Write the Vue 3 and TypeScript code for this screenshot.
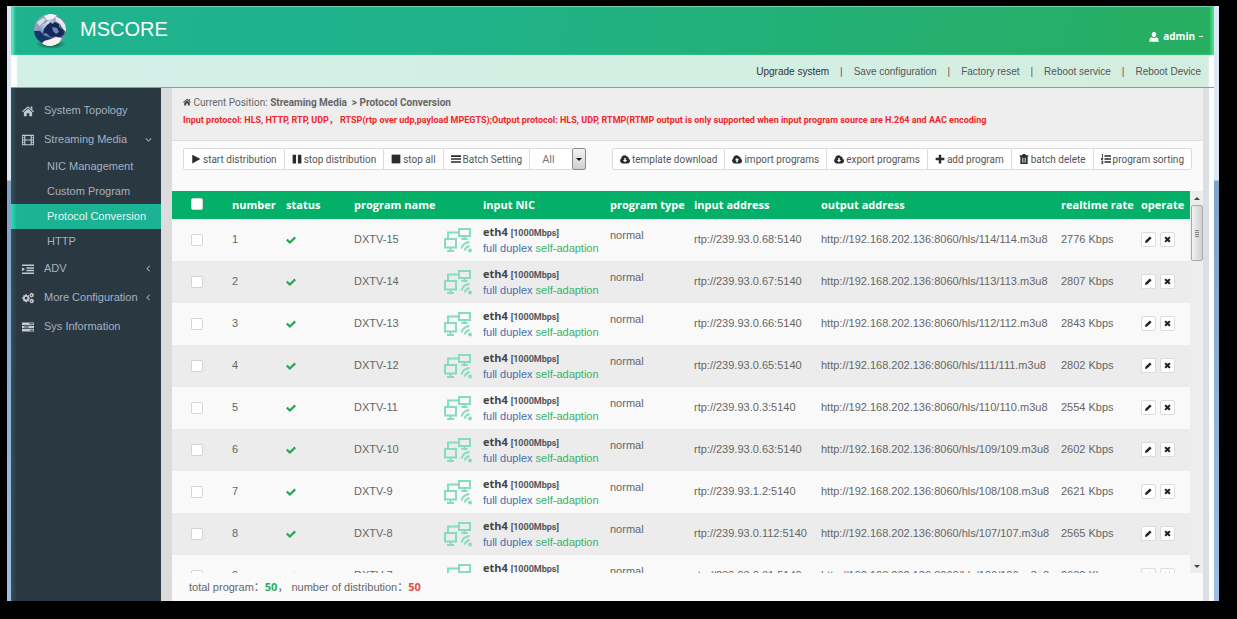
<script setup lang="ts">
import { ref } from 'vue'

interface Program {
  id: number
  name: string
  input: string
  output: string
  rate: number
  selected: boolean
}

const icons: Record<string, string> = {
  home: 'M8 1.500 16 8.300l-1 1.300L8 3.800 1 9.600 0 8.300zM11.600 2h2.200v4l-2.200-1.800zM8 5l5.500 4.500V15H9.700v-4H6.300v4H2.500V9.500z',
  film: 'M0 1h16v14H0zM1.200 2.500v2h1.800v-2zM1.200 5.700v2h1.800v-2zM1.200 8.900v2h1.800v-2zM1.200 12v1.500h1.800V12zM13 2.500v2h1.800v-2zM13 5.700v2h1.800v-2zM13 8.900v2h1.800v-2zM13 12v1.500h1.800V12zM4.500 2.500v4.700h7V2.500zM4.500 8.700v4.800h7V8.700z',
  indent: 'M0 2h16v2H0zM6 5.500h10v2H6zM6 9h10v2H6zM0 12.500h16v2H0zM0 5.500 4 8.300 0 11z',
  server: 'M0 2h16v3.200H0zM0 6.400h16v3.200H0zM0 10.800h16V14H0zM10 3v1.200h5V3zM3 7.400v1.200h6V7.400zM11 11.800V13h4v-1.200z',
  gears: 'M4.500 3h2l.3 1.500 1.500-.6 1.300 1.400-.8 1.400 1.700.5v2l-1.700.5.8 1.400-1.300 1.400-1.500-.6-.3 1.600h-2l-.4-1.600-1.400.6L1.300 11l.8-1.400L.2 9.200v-2l1.900-.5-.8-1.400 1.400-1.400 1.400.6zM5.500 6.400a1.800 1.800 0 1 0 0 3.600 1.800 1.800 0 0 0 0-3.600zM12.500.8l1 1 1.400-.2.3 1.400 1 .7-.8 1.100.2 1.300-1.400.3-.9 1.100-1.100-.9-1.400.2-.2-1.400-1-.9.8-1.100-.1-1.300 1.300-.2zM12.600 3.400a.9.9 0 1 0 0 1.800.9.9 0 0 0 0-1.800zM12.500 8.600l1 1 1.400-.2.3 1.400 1 .7-.8 1.100.2 1.300-1.400.3-.9 1.100-1.100-.9-1.400.2-.2-1.400-1-.9.8-1.100-.1-1.300 1.300-.2zM12.600 11.200a.9.9 0 1 0 0 1.800.9.9 0 0 0 0-1.800z',
  down: 'M2.500 4.500 8 10l5.500-5.500L15 6l-7 7-7-7z',
  left: 'M11.500 2.500 6 8l5.500 5.500L10 15 3 8l7-7z',
  play: 'M2 1v14l13-7z',
  pause: 'M1 1h5.500v14H1zM9.500 1H15v14H9.500z',
  stop: 'M1 1h14v14H1z',
  bars: 'M0 2h16v2.600H0zM0 6.700h16v2.600H0zM0 11.400h16V14H0z',
  cloudDown: 'M4 15a4.300 4.300 0 0 1-2-7.800A5 5 0 0 1 11 4a3 3 0 0 1 2.700 3.700A3.800 3.800 0 0 1 12.800 15zM6.800 6.500v3H4.500L8 13l3.500-3.500H9.200v-3z',
  cloudUp: 'M4 15a4.300 4.300 0 0 1-2-7.800A5 5 0 0 1 11 4a3 3 0 0 1 2.700 3.700A3.800 3.800 0 0 1 12.800 15zM6.800 13v-3H4.500L8 6.500l3.500 3.500H9.200v3z',
  plus: 'M6 1h4v5h5v4h-5v5H6v-5H1V6h5z',
  trash: 'M6 0h4l1 2h4v2h-1.200v12H2.200V4H1V2h4zM5 6v8h1V6zM7.500 6v8h1V6zM10 6v8h1V6z',
  list: 'M5.500 2H16v2.400H5.500zM5.500 6.800H16v2.400H5.500zM5.500 11.600H16V14H5.500zM1.500 0H3v5H1.500zM0 6h3.500v1.500L2 9h1.500v1H0V8.500L1.500 7H0zM0 11h3.500v5H0v-1h2v-1H1v-1h1v-1H0z',
  user: 'M8 0c5 0 4.500 8 0 8.500C3.500 8 3 0 8 0zM4.500 8.200C6.500 10 9.500 10 11.500 8.200c3 .4 4 3 3.800 7.300H.7c-.2-4.300.8-6.900 3.800-7.300z',
  check: 'M0 8.500 2.500 6l3.700 3.500L13.500 2.500 16 5 6.200 14.500z',
  pencil: 'M0 16l1-5L11 1l4 4L5 15z',
  close: 'M1 4l3-3 4 3.500L12 1l3 3-3.500 4 3.500 4-3 3-4-3.500L4 15l-3-3 3.500-4z',
}

const links: string[] = ['Upgrade system', 'Save configuration', 'Factory reset', 'Reboot service', 'Reboot Device']

const menu = [
  { label: 'System Topology', icon: 'home', arrow: '', children: [] as string[] },
  { label: 'Streaming Media', icon: 'film', arrow: 'down', children: ['NIC Management', 'Custom Program', 'Protocol Conversion', 'HTTP'] },
  { label: 'ADV', icon: 'indent', arrow: 'left', children: [] as string[] },
  { label: 'More Configuration', icon: 'gears', arrow: 'left', children: [] as string[] },
  { label: 'Sys Information', icon: 'server', arrow: '', children: [] as string[] },
]
const current = ref('Protocol Conversion')

const runActions = [
  { label: 'start distribution', icon: 'play' },
  { label: 'stop distribution', icon: 'pause' },
  { label: 'stop all', icon: 'stop' },
  { label: 'Batch Setting', icon: 'bars' },
]
const editActions = [
  { label: 'template download', icon: 'cloudDown' },
  { label: 'import programs', icon: 'cloudUp' },
  { label: 'export programs', icon: 'cloudDown' },
  { label: 'add program', icon: 'plus' },
  { label: 'batch delete', icon: 'trash' },
  { label: 'program sorting', icon: 'list' },
]

const sources: [string, number][] = [
  ['239.93.0.68', 2776],
  ['239.93.0.67', 2807],
  ['239.93.0.66', 2843],
  ['239.93.0.65', 2802],
  ['239.93.0.3', 2554],
  ['239.93.0.63', 2602],
  ['239.93.1.2', 2621],
  ['239.93.0.112', 2565],
  ['239.93.0.61', 2682],
]
const programs = ref<Program[]>(
  sources.map(([ip, rate], i) => ({
    id: i + 1,
    name: `DXTV-${15 - i}`,
    input: `rtp://${ip}:5140`,
    output: `http://192.168.202.136:8060/hls/${114 - i}/${114 - i}.m3u8`,
    rate,
    selected: false,
  })),
)

const allSelected = ref(false)
const filter = ref('All')
function toggleAll() {
  programs.value.forEach((p) => (p.selected = allSelected.value))
}
</script>

<template>
  <div class="frame">
    <div class="window">
      <header class="banner">
        <svg class="globe" viewBox="0 0 36 36" aria-hidden="true">
          <defs>
            <radialGradient id="sea" cx="0.4" cy="0.25" r="0.8">
              <stop offset="0" stop-color="#dfe6ee" />
              <stop offset="0.4" stop-color="#7f9bbd" />
              <stop offset="0.75" stop-color="#2a4674" />
              <stop offset="1" stop-color="#aebccb" />
            </radialGradient>
            <radialGradient id="shade">
              <stop offset="0.4" stop-color="#0c5b46" stop-opacity="0.8" />
              <stop offset="1" stop-color="#0c5b46" stop-opacity="0" />
            </radialGradient>
            <filter id="soften" x="0" y="0" width="1" height="1"><feGaussianBlur stdDeviation="0.6" /></filter>
            <clipPath id="disc"><circle cx="18" cy="17" r="16" /></clipPath>
          </defs>
          <ellipse cx="19" cy="31" rx="15" ry="5" fill="url(#shade)" />
          <g clip-path="url(#disc)">
            <circle cx="18" cy="17" r="16" fill="url(#sea)" />
            <g filter="url(#soften)">
              <path d="M0 14C3 7 8 3 14 2l3 4-3 4-5 2-2 5-6 2z" fill="#8fa2bb" />
              <path d="M5 9l6-4 3 1-3 4-4 3z" fill="#d6dde6" />
              <path d="M15 12l4-3 1 2 3-2 4 2v3l4 3 1 4-4 3-5-1-4 1-5-4-3 1 1-5z" fill="#12265a" />
              <path d="M2 18l6 0 5 5 6 2-2 5-8-1-6-6z" fill="#183569" />
              <path d="M20 14l5 1 2 4-3 2-3-3z" fill="#6c89b4" />
              <path d="M23 3l6 3 5 6 1 8-4-4-3-5-4-3z" fill="#ece5e7" />
              <path d="M12 28l7-2 5-2 6 1-3 5-9 4-8-3z" fill="#f6f1f3" />
              <path d="M12 3l8-3 5 2-4 4-6 1z" fill="#f0f3f6" />
            </g>
          </g>
        </svg>
        <h1 class="brand">MSCORE</h1>
        <button class="account" type="button">
          <svg class="icon" viewBox="0 0 16 16" aria-hidden="true"><path :d="icons.user" /></svg>
          <span>admin</span>
          <i class="dash"></i>
        </button>
      </header>

      <nav class="links" aria-label="System">
        <template v-for="(link, i) in links" :key="link">
          <span v-if="i" class="sep">|</span>
          <a href="#" :class="{ strong: i === 0 }">{{ link }}</a>
        </template>
      </nav>

      <div class="body">
        <nav class="side" aria-label="Main">
          <template v-for="item in menu" :key="item.label">
            <a class="item" href="#">
              <svg class="side-icon" viewBox="0 0 16 16" fill-rule="evenodd" aria-hidden="true"><path :d="icons[item.icon]" /></svg>
              <span class="item-label">{{ item.label }}</span>
              <svg v-if="item.arrow" class="arrow" viewBox="0 0 16 16" aria-hidden="true"><path :d="icons[item.arrow]" /></svg>
            </a>
            <a
              v-for="child in item.children"
              :key="child"
              class="sub"
              :class="{ active: child === current }"
              href="#"
              @click.prevent="current = child"
            >{{ child }}</a>
          </template>
        </nav>

        <main class="content">
          <section class="position">
            <p class="crumbs">
              <svg class="icon" viewBox="0 0 16 16" aria-hidden="true"><path :d="icons.home" /></svg>
              Current Position: <b>Streaming Media &nbsp;&gt; Protocol Conversion</b>
            </p>
            <p class="notice">Input protocol: HLS, HTTP, RTP, UDP，&nbsp;RTSP(rtp over udp,payload MPEGTS);Output protocol: HLS, UDP, RTMP(RTMP output is only supported when input program source are H.264 and AAC encoding</p>
          </section>

          <section class="toolbar">
            <div class="group run">
              <button v-for="a in runActions" :key="a.label" type="button">
                <svg class="icon" viewBox="0 0 16 16" fill-rule="evenodd" aria-hidden="true"><path :d="icons[a.icon]" /></svg>{{ a.label }}
              </button>
              <label class="filter">
                <select v-model="filter" aria-label="Filter programs">
                  <option>All</option>
                </select>
                <span class="drop"></span>
              </label>
            </div>
            <div class="group edit">
              <button v-for="a in editActions" :key="a.label" type="button">
                <svg class="icon" viewBox="0 0 16 16" fill-rule="evenodd" aria-hidden="true"><path :d="icons[a.icon]" /></svg>{{ a.label }}
              </button>
            </div>
          </section>

          <div class="list">
            <div class="scroller">
              <table>
                <colgroup>
                  <col class="c-check" /><col class="c-number" /><col class="c-status" /><col class="c-name" />
                  <col class="c-nic" /><col class="c-type" /><col class="c-input" /><col class="c-output" />
                  <col class="c-rate" /><col class="c-operate" />
                </colgroup>
                <thead>
                  <tr>
                    <th class="pick"><input v-model="allSelected" type="checkbox" aria-label="Select all" @change="toggleAll" /></th>
                    <th>number</th>
                    <th>status</th>
                    <th>program name</th>
                    <th class="nic-head">input NIC</th>
                    <th>program type</th>
                    <th>input address</th>
                    <th>output address</th>
                    <th>realtime rate</th>
                    <th>operate</th>
                  </tr>
                </thead>
                <tbody>
                  <tr v-for="p in programs" :key="p.id">
                    <td class="pick"><input v-model="p.selected" type="checkbox" :aria-label="`Select ${p.name}`" /></td>
                    <td>{{ p.id }}</td>
                    <td><svg class="tick" viewBox="0 0 16 16" role="img" aria-label="running"><path :d="icons.check" /></svg></td>
                    <td>{{ p.name }}</td>
                    <td>
                      <div class="nic">
                        <svg class="nic-icon" viewBox="0 0 30 26" aria-hidden="true">
                          <g fill="none" stroke="#86dcbd" stroke-width="2">
                            <path d="M16 2h11v7H16zM21.500 9v3M18.500 12h6M15 5.500H5V11M2 12h11v8.500H2zM7.500 21v3M4 24h7" />
                            <path d="M18.500 21.500c1-4 4-6 8-6.500M21.500 23.500c1-2.500 2.500-4 5-4.500" />
                          </g>
                          <circle cx="27" cy="23.500" r="2" fill="#86dcbd" />
                        </svg>
                        <div>
                          <div class="eth">eth4 <span>[1000Mbps]</span></div>
                          <div><span class="duplex">full duplex</span> <span class="adapt">self-adaption</span></div>
                        </div>
                      </div>
                    </td>
                    <td class="type">normal</td>
                    <td>{{ p.input }}</td>
                    <td>{{ p.output }}</td>
                    <td>{{ p.rate }} Kbps</td>
                    <td>
                      <div class="ops">
                        <button type="button" aria-label="Edit"><svg viewBox="0 0 16 16"><path :d="icons.pencil" /></svg></button>
                        <button type="button" aria-label="Delete"><svg viewBox="0 0 16 16"><path :d="icons.close" /></svg></button>
                      </div>
                    </td>
                  </tr>
                </tbody>
              </table>
            </div>
            <div class="scrollbar" aria-hidden="true">
              <span class="up"></span>
              <span class="thumb"><i></i></span>
              <span class="down"></span>
            </div>
          </div>

          <footer class="totals">total program：<b class="ok">50</b>， number of distribution：<b class="bad">50</b></footer>
        </main>
      </div>
    </div>
  </div>
</template>

<style>
body {
  margin: 0;
  background: #000;
}
</style>

<style scoped>
* {
  box-sizing: border-box;
}
.frame {
  height: 100vh;
  padding: 6px 18px 18px 7px;
  background: #000;
  color: #666;
  font: 11px/15px "Liberation Sans", Arial, "Noto Sans CJK SC", sans-serif;
}
.window {
  display: flex;
  flex-direction: column;
  height: 100%;
  border-left: 4px solid #8aa9c9;
  border-right: 5px solid #b4d3ee;
  border-image: linear-gradient(#dde7f5 0, #dde7f5 174px, #7fa3c9 176px, #9dc0e2 100%) 1;
  border-top: 0;
  border-bottom: 0;
  background: #fff;
}
a {
  color: inherit;
  text-decoration: none;
}
button {
  font: inherit;
  color: inherit;
}
p,
h1 {
  margin: 0;
}
.icon {
  flex: none;
  width: 10px;
  height: 10px;
  fill: currentColor;
}
.banner {
  display: flex;
  align-items: center;
  flex: none;
  height: 49px;
  padding: 0 11px 0 21px;
  background: linear-gradient(100deg, #1eb38f, #1fb28b 35%, #27ae60);
  box-shadow: inset 4px 0 3px -1px #5fe8bd, inset -4px 0 3px -1px #4ce08b, inset 0 1px 0 #7cc9ac;
  color: #fff;
}
.globe {
  width: 36px;
  height: 36px;
}
.brand {
  flex: 1;
  padding: 0 0 3px 12px;
  font-size: 20px;
  line-height: 24px;
  font-weight: 400;
}
.account {
  display: flex;
  align-items: center;
  gap: 4px;
  padding: 0;
  margin-top: 12px;
  border: 0;
  background: none;
  font: bold 10px/15px "Open Sans", sans-serif;
}
.dash {
  width: 4px;
  height: 1px;
  background: #fff;
}
.links {
  display: flex;
  align-items: center;
  justify-content: flex-end;
  gap: 11px;
  flex: none;
  height: 33px;
  padding-right: 13px;
  border-bottom: 1px solid #4dbf9e;
  background: linear-gradient(90deg, #fff 5px, #d3f0e8 7px, #d3eee0 calc(100% - 6px), #fff calc(100% - 4px));
  color: #555;
  font-size: 10px;
}
.strong {
  color: #333;
}
.body {
  display: flex;
  flex: 1;
  min-height: 0;
}
.side {
  flex: none;
  width: 150px;
  padding-top: 8px;
  background: linear-gradient(90deg, #35505a, #293841 6px);
  color: #a7b1c2;
}
.item {
  display: flex;
  align-items: center;
  height: 29px;
  padding: 0 9px 0 11px;
}
.side-icon {
  width: 12px;
  height: 12px;
  margin-right: 10px;
  fill: #c3c9d0;
}
.item-label {
  flex: 1;
  white-space: nowrap;
}
.arrow {
  width: 7px;
  height: 7px;
  fill: currentColor;
}
.sub {
  display: block;
  padding-left: 36px;
  line-height: 25px;
}
.active {
  background: linear-gradient(90deg, #2be0b4, #1bb394 6px);
  color: #e6f7f3;
}
.content {
  display: flex;
  flex-direction: column;
  flex: 1;
  min-width: 0;
  margin-right: 5px;
  border-left: 11px solid #dcdcdc;
  border-right: 6px solid #dcdfe3;
  background: #fafafa;
}
.position {
  flex: none;
  height: 53px;
  padding: 7px 11px 0;
  border-bottom: 1px solid #dfdfdf;
  background: #eee;
  white-space: nowrap;
}
.crumbs {
  font: 10px/16px Roboto, sans-serif;
}
.crumbs .icon {
  width: 8px;
  height: 8px;
  fill: #444;
}
.notice {
  color: #f0262a;
  font: bold 9px/18px Roboto, "Noto Sans CJK SC", sans-serif;
}
.toolbar {
  display: flex;
  justify-content: space-between;
  flex: none;
  padding: 7px 11px 21px;
}
.group {
  display: flex;
  height: 22px;
}
.group > button {
  display: flex;
  align-items: center;
  gap: 2px;
  padding: 0 7px;
  border: 1px solid #dcdcdc;
  border-left-width: 0;
  background: #fff;
  color: #555;
  font: 10px/15px Roboto, sans-serif;
  white-space: nowrap;
}
.group > button:first-child {
  border-left-width: 1px;
  border-radius: 2px 0 0 2px;
}
.group > button:last-child {
  border-radius: 0 2px 2px 0;
}
.group .icon {
  fill: #2b2b2b;
}
.filter {
  display: flex;
}
select {
  appearance: none;
  width: 42px;
  padding: 0 0 0 12px;
  border: 1px solid #dcdcdc;
  border-left: 0;
  border-right: 0;
  border-radius: 0;
  background: #fff;
  color: #777;
  font: 11px/15px Roboto, sans-serif;
}
.drop {
  display: grid;
  place-items: center;
  width: 14px;
  border: 1px solid #8a8a8a;
  border-radius: 2px;
  background: linear-gradient(#f4f4f4, #cfcfcf);
}
.drop::after {
  content: "";
  border: 3px solid transparent;
  border-top-color: #111;
  border-bottom: 0;
}
.list {
  display: flex;
  flex: 1;
  min-height: 0;
}
.scroller {
  flex: 1;
  min-width: 0;
  overflow: auto;
  scrollbar-width: none;
}
table {
  width: 100%;
  table-layout: fixed;
  border-collapse: collapse;
}
.c-check { width: 60px; }
.c-number { width: 54px; }
.c-status { width: 68px; }
.c-name { width: 89px; }
.c-nic { width: 167px; }
.c-type { width: 84px; }
.c-input { width: 127px; }
.c-rate { width: 80px; }
.c-operate { width: 49px; }
th {
  position: sticky;
  top: 0;
  height: 28px;
  padding: 0 0 2px;
  background: #04b068;
  color: #fff;
  font: bold 11px/15px "Open Sans", sans-serif;
  text-align: left;
  white-space: nowrap;
}
td {
  height: 42px;
  padding: 0 0 1px;
  white-space: nowrap;
}
tbody tr:nth-child(odd) {
  background: #f9f9f9;
}
tbody tr:nth-child(even) {
  background: #ececec;
}
.pick {
  padding-left: 19px;
}
.pick input {
  display: block;
  appearance: none;
  width: 12px;
  height: 12px;
  margin: 0;
  border: 1px solid #d5d5d5;
  border-radius: 2px;
  background: #fff;
}
.pick input:checked {
  background: #1bb394;
}
.nic-head {
  padding-left: 40px;
}
.tick {
  display: block;
  width: 10px;
  height: 10px;
  fill: #27a65a;
}
.nic {
  display: flex;
  align-items: center;
  gap: 10px;
}
.nic-icon {
  width: 30px;
  height: 26px;
}
.eth {
  color: #444;
  font: bold 11px/15px "Open Sans", sans-serif;
}
.eth span {
  color: #555;
  font: bold 9px/15px Roboto, sans-serif;
}
.duplex {
  color: #4a6cae;
}
.adapt {
  color: #35b46a;
}
.type {
  padding-bottom: 9px;
}
.ops {
  display: flex;
  gap: 4px;
}
.ops button {
  display: grid;
  place-items: center;
  width: 15px;
  height: 15px;
  padding: 0;
  border: 1px solid #dcdcdc;
  border-radius: 2px;
  background: #fff;
}
.ops svg {
  width: 7px;
  height: 7px;
  fill: #222;
}
.scrollbar {
  display: flex;
  flex-direction: column;
  align-items: center;
  flex: none;
  width: 13px;
  background: #ededed;
}
.up,
.down {
  display: grid;
  place-items: center;
  width: 13px;
  height: 14px;
}
.up::after,
.down::after {
  content: "";
  border: 3px solid transparent;
}
.up::after {
  border-top: 0;
  border-bottom-color: #444;
}
.down {
  margin-top: auto;
}
.down::after {
  border-bottom: 0;
  border-top-color: #444;
}
.thumb {
  display: grid;
  place-items: center;
  width: 12px;
  height: 56px;
  border: 1px solid #aaa;
  border-radius: 2px;
  background: linear-gradient(90deg, #f2f2f2, #cfcfcf);
}
.thumb i {
  width: 4px;
  height: 7px;
  background: repeating-linear-gradient(#888 0, #888 1px, #ddd 1px, #ddd 2px);
}
.totals {
  flex: none;
  height: 28px;
  padding-left: 17px;
  line-height: 28px;
}
.ok,
.bad {
  font-family: "Open Sans", sans-serif;
}
.ok {
  color: #27ae60;
}
.bad {
  color: #e74c3c;
}
</style>
